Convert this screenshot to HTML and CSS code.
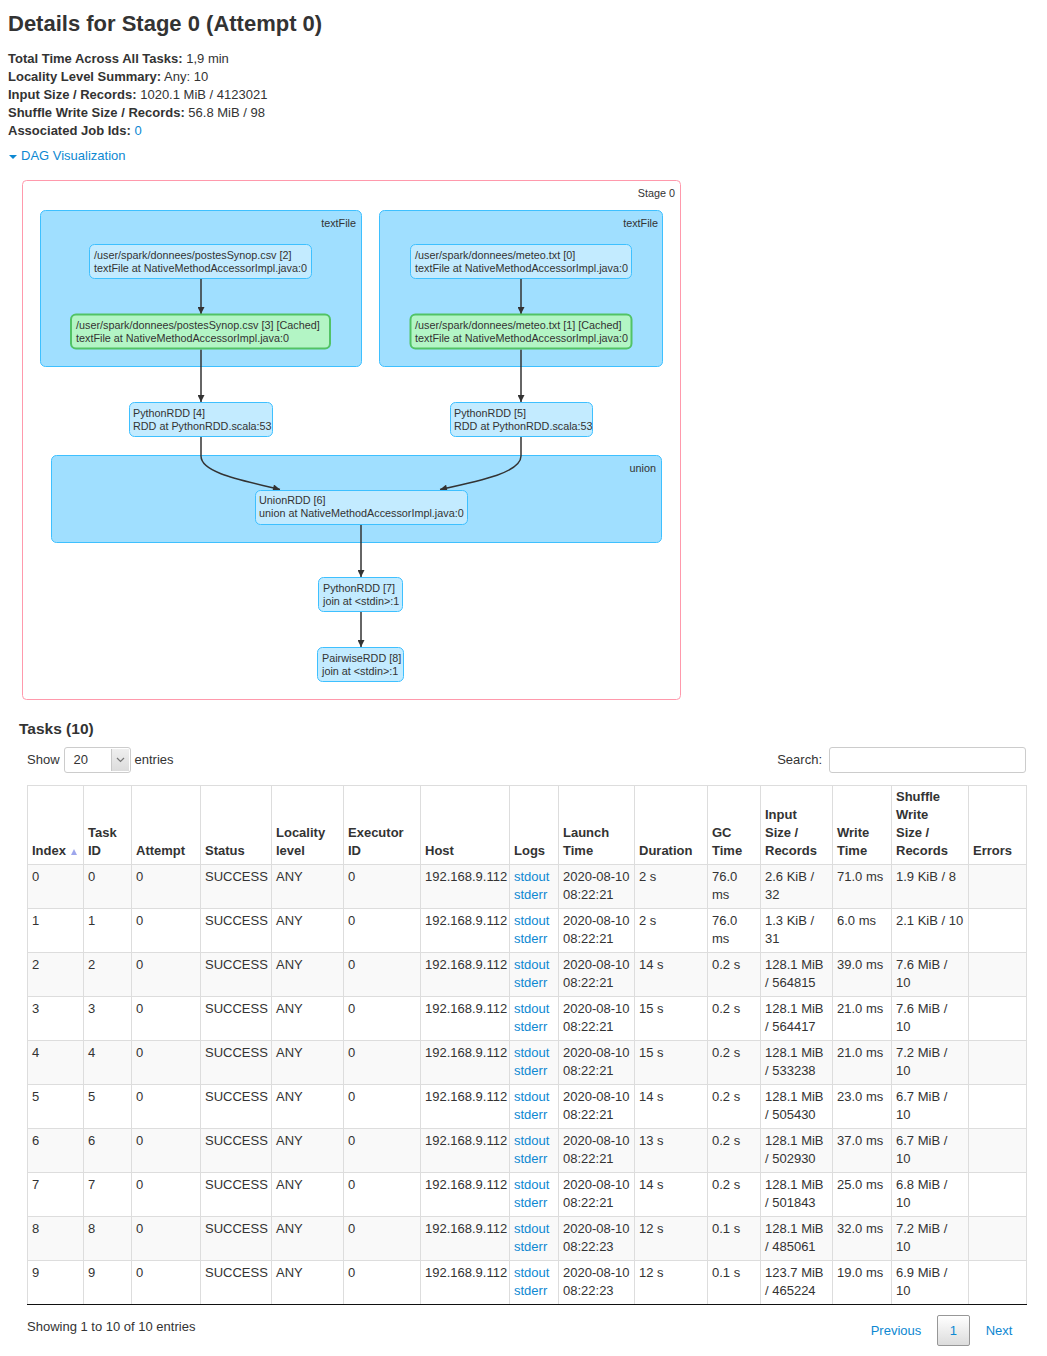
FILE: index.html
```html
<!DOCTYPE html>
<html lang="en">
<head>
<meta charset="utf-8">
<title>Details for Stage 0 (Attempt 0)</title>
<link rel="stylesheet" href="styles.css">
</head>
<body>
<div class="page">
  <h3 class="title">Details for Stage 0 (Attempt 0)</h3>
  <ul class="summary">
    <li><strong>Total Time Across All Tasks:</strong> 1,9 min</li>
    <li><strong>Locality Level Summary:</strong> Any: 10</li>
    <li><strong>Input Size / Records:</strong> 1020.1 MiB / 4123021</li>
    <li><strong>Shuffle Write Size / Records:</strong> 56.8 MiB / 98</li>
    <li><strong>Associated Job Ids:</strong> <a href="#">0</a></li>
  </ul>
  <a class="dag-toggle" href="#"><span class="caret"></span><span>DAG Visualization</span></a>

  <svg class="dag" width="660" height="521" viewBox="22 180 660 521" xmlns="http://www.w3.org/2000/svg">
    <defs>
      <marker id="arrow" viewBox="0 0 10 10" refX="10" refY="5" markerUnits="userSpaceOnUse" markerWidth="8" markerHeight="7" orient="auto">
        <path d="M0,0 L10,5 L0,10 z" fill="#333"/>
      </marker>
    </defs>
    <rect class="stage" x="22.5" y="180.5" width="658" height="519" rx="4"/>
    <text class="lbl" x="675" y="197" text-anchor="end">Stage 0</text>

    <rect class="cluster" x="40.5" y="210.5" width="321" height="156" rx="5"/>
    <text class="lbl" x="356" y="227" text-anchor="end">textFile</text>
    <rect class="cluster" x="379.5" y="210.5" width="283" height="156" rx="5"/>
    <text class="lbl" x="658" y="227" text-anchor="end">textFile</text>
    <rect class="cluster" x="51.5" y="455.5" width="610" height="87" rx="5"/>
    <text class="lbl" x="656" y="472" text-anchor="end">union</text>

    <path class="edge" d="M201,278.5 L201,314"/>
    <path class="edge" d="M521,278.5 L521,314"/>
    <path class="edge" d="M201,349.5 L201,402"/>
    <path class="edge" d="M521,349.5 L521,402"/>
    <path class="edge" d="M201,436.5 L201,456 C201,472 236,479 280,489.5"/>
    <path class="edge" d="M521,436.5 L521,456 C521,472 484,480 440,489.5"/>
    <path class="edge" d="M361,524.5 L361,577"/>
    <path class="edge" d="M361,611.5 L361,647"/>

    <rect class="node" x="89.5" y="244.5" width="222" height="34" rx="5"/>
    <text class="nt" x="94" y="259">/user/spark/donnees/postesSynop.csv [2]</text>
    <text class="nt" x="94" y="272">textFile at NativeMethodAccessorImpl.java:0</text>

    <rect class="node" x="410.5" y="244.5" width="221" height="34" rx="5"/>
    <text class="nt" x="415" y="259">/user/spark/donnees/meteo.txt [0]</text>
    <text class="nt" x="415" y="272">textFile at NativeMethodAccessorImpl.java:0</text>

    <rect class="node cached" x="71" y="314.5" width="259" height="34" rx="5"/>
    <text class="nt" x="76" y="329">/user/spark/donnees/postesSynop.csv [3] [Cached]</text>
    <text class="nt" x="76" y="342">textFile at NativeMethodAccessorImpl.java:0</text>

    <rect class="node cached" x="410.5" y="314.5" width="221" height="34" rx="5"/>
    <text class="nt" x="415" y="329">/user/spark/donnees/meteo.txt [1] [Cached]</text>
    <text class="nt" x="415" y="342">textFile at NativeMethodAccessorImpl.java:0</text>

    <rect class="node" x="129.5" y="402.5" width="143" height="34" rx="5"/>
    <text class="nt" x="133" y="417">PythonRDD [4]</text>
    <text class="nt" x="133" y="430">RDD at PythonRDD.scala:53</text>

    <rect class="node" x="450.5" y="402.5" width="142" height="34" rx="5"/>
    <text class="nt" x="454" y="417">PythonRDD [5]</text>
    <text class="nt" x="454" y="430">RDD at PythonRDD.scala:53</text>

    <rect class="node" x="255.5" y="490.5" width="212" height="34" rx="5"/>
    <text class="nt" x="259" y="504">UnionRDD [6]</text>
    <text class="nt" x="259" y="517">union at NativeMethodAccessorImpl.java:0</text>

    <rect class="node" x="318.5" y="577.5" width="84" height="34" rx="5"/>
    <text class="nt" x="323" y="592">PythonRDD [7]</text>
    <text class="nt" x="323" y="605">join at &lt;stdin&gt;:1</text>

    <rect class="node" x="317.5" y="647.5" width="86" height="34" rx="5"/>
    <text class="nt" x="322" y="662">PairwiseRDD [8]</text>
    <text class="nt" x="322" y="675">join at &lt;stdin&gt;:1</text>
  </svg>

  <section class="tasks">
    <h4 class="tasks-title">Tasks (10)</h4>
    <div class="tasks-body">
      <div class="controls">
        <div class="length">
          <span>Show</span>
          <span class="select"><span class="select-val">20</span><span class="select-btn"><svg width="9" height="6" viewBox="0 0 9 6"><path d="M1 1 L4.5 4.5 L8 1" fill="none" stroke="#777" stroke-width="1.2"/></svg></span></span>
          <span>entries</span>
        </div>
        <div class="search">
          <span>Search:</span>
          <span class="search-input"></span>
        </div>
      </div>

      <table class="task-table">
        <colgroup>
          <col style="width:56px"><col style="width:48px"><col style="width:69px"><col style="width:71px"><col style="width:72px"><col style="width:77px"><col style="width:89px"><col style="width:49px"><col style="width:76px"><col style="width:73px"><col style="width:53px"><col style="width:72px"><col style="width:59px"><col style="width:77px"><col style="width:58px">
        </colgroup>
        <thead>
          <tr>
            <th>Index<span class="sort-asc"></span></th>
            <th>Task<br>ID</th>
            <th>Attempt</th>
            <th>Status</th>
            <th>Locality<br>level</th>
            <th>Executor<br>ID</th>
            <th>Host</th>
            <th>Logs</th>
            <th>Launch<br>Time</th>
            <th>Duration</th>
            <th>GC<br>Time</th>
            <th>Input<br>Size /<br>Records</th>
            <th>Write<br>Time</th>
            <th>Shuffle<br>Write<br>Size /<br>Records</th>
            <th>Errors</th>
          </tr>
        </thead>
        <tbody>
          <tr><td>0</td><td>0</td><td>0</td><td>SUCCESS</td><td>ANY</td><td>0</td><td>192.168.9.112</td><td><a href="#">stdout</a><br><a href="#">stderr</a></td><td>2020-08-10<br>08:22:21</td><td>2 s</td><td>76.0<br>ms</td><td>2.6 KiB /<br>32</td><td>71.0 ms</td><td>1.9 KiB / 8</td><td></td></tr>
          <tr><td>1</td><td>1</td><td>0</td><td>SUCCESS</td><td>ANY</td><td>0</td><td>192.168.9.112</td><td><a href="#">stdout</a><br><a href="#">stderr</a></td><td>2020-08-10<br>08:22:21</td><td>2 s</td><td>76.0<br>ms</td><td>1.3 KiB /<br>31</td><td>6.0 ms</td><td>2.1 KiB / 10</td><td></td></tr>
          <tr><td>2</td><td>2</td><td>0</td><td>SUCCESS</td><td>ANY</td><td>0</td><td>192.168.9.112</td><td><a href="#">stdout</a><br><a href="#">stderr</a></td><td>2020-08-10<br>08:22:21</td><td>14 s</td><td>0.2 s</td><td>128.1 MiB<br>/ 564815</td><td>39.0 ms</td><td>7.6 MiB /<br>10</td><td></td></tr>
          <tr><td>3</td><td>3</td><td>0</td><td>SUCCESS</td><td>ANY</td><td>0</td><td>192.168.9.112</td><td><a href="#">stdout</a><br><a href="#">stderr</a></td><td>2020-08-10<br>08:22:21</td><td>15 s</td><td>0.2 s</td><td>128.1 MiB<br>/ 564417</td><td>21.0 ms</td><td>7.6 MiB /<br>10</td><td></td></tr>
          <tr><td>4</td><td>4</td><td>0</td><td>SUCCESS</td><td>ANY</td><td>0</td><td>192.168.9.112</td><td><a href="#">stdout</a><br><a href="#">stderr</a></td><td>2020-08-10<br>08:22:21</td><td>15 s</td><td>0.2 s</td><td>128.1 MiB<br>/ 533238</td><td>21.0 ms</td><td>7.2 MiB /<br>10</td><td></td></tr>
          <tr><td>5</td><td>5</td><td>0</td><td>SUCCESS</td><td>ANY</td><td>0</td><td>192.168.9.112</td><td><a href="#">stdout</a><br><a href="#">stderr</a></td><td>2020-08-10<br>08:22:21</td><td>14 s</td><td>0.2 s</td><td>128.1 MiB<br>/ 505430</td><td>23.0 ms</td><td>6.7 MiB /<br>10</td><td></td></tr>
          <tr><td>6</td><td>6</td><td>0</td><td>SUCCESS</td><td>ANY</td><td>0</td><td>192.168.9.112</td><td><a href="#">stdout</a><br><a href="#">stderr</a></td><td>2020-08-10<br>08:22:21</td><td>13 s</td><td>0.2 s</td><td>128.1 MiB<br>/ 502930</td><td>37.0 ms</td><td>6.7 MiB /<br>10</td><td></td></tr>
          <tr><td>7</td><td>7</td><td>0</td><td>SUCCESS</td><td>ANY</td><td>0</td><td>192.168.9.112</td><td><a href="#">stdout</a><br><a href="#">stderr</a></td><td>2020-08-10<br>08:22:21</td><td>14 s</td><td>0.2 s</td><td>128.1 MiB<br>/ 501843</td><td>25.0 ms</td><td>6.8 MiB /<br>10</td><td></td></tr>
          <tr><td>8</td><td>8</td><td>0</td><td>SUCCESS</td><td>ANY</td><td>0</td><td>192.168.9.112</td><td><a href="#">stdout</a><br><a href="#">stderr</a></td><td>2020-08-10<br>08:22:23</td><td>12 s</td><td>0.1 s</td><td>128.1 MiB<br>/ 485061</td><td>32.0 ms</td><td>7.2 MiB /<br>10</td><td></td></tr>
          <tr><td>9</td><td>9</td><td>0</td><td>SUCCESS</td><td>ANY</td><td>0</td><td>192.168.9.112</td><td><a href="#">stdout</a><br><a href="#">stderr</a></td><td>2020-08-10<br>08:22:23</td><td>12 s</td><td>0.1 s</td><td>123.7 MiB<br>/ 465224</td><td>19.0 ms</td><td>6.9 MiB /<br>10</td><td></td></tr>
        </tbody>
      </table>

      <div class="table-footer">
        <div class="info">Showing 1 to 10 of 10 entries</div>
        <div class="paginate">
          <a class="pbtn" href="#">Previous</a>
          <a class="pbtn current" href="#">1</a>
          <a class="pbtn" href="#">Next</a>
        </div>
      </div>
    </div>
  </section>
</div>
</body>
</html>
```

FILE: styles.css
```css
html, body {
  margin: 0;
  padding: 0;
}

body {
  font-family: "Liberation Sans", Arial, sans-serif;
  font-size: 13px;
  line-height: 18px;
  color: #333;
  background: #fff;
}

a {
  color: #0d88d2;
  text-decoration: none;
}

.page {
  padding: 0 21px 0 8px;
}

.title {
  font-size: 22px;
  line-height: 24px;
  font-weight: bold;
  margin: 12px 0 14px;
}

.summary {
  list-style: none;
  margin: 0;
  padding: 0;
}

.dag-toggle {
  display: flex;
  align-items: center;
  gap: 4px;
  margin-top: 7px;
  width: max-content;
}

.caret {
  width: 0;
  height: 0;
  margin-left: 1px;
  margin-top: 1px;
  border-left: 4px solid transparent;
  border-right: 4px solid transparent;
  border-top: 4px solid #0d88d2;
}

.dag {
  display: block;
  margin: 15px 0 0 14px;
}

.dag .stage {
  fill: #fff;
  stroke: #ff99ac;
  stroke-width: 1;
}

.dag .cluster {
  fill: #a0dfff;
  stroke: #3ec0ff;
  stroke-width: 1;
}

.dag .node {
  fill: #c3ebff;
  stroke: #3ec0ff;
  stroke-width: 1;
}

.dag .node.cached {
  fill: #b3f5c5;
  stroke: #52c366;
  stroke-width: 2;
}

.dag .edge {
  fill: none;
  stroke: #333;
  stroke-width: 1.5;
  marker-end: url(#arrow);
}

.dag text {
  font-family: "Liberation Sans", Arial, sans-serif;
  font-size: 10.8px;
  fill: #333;
}

.tasks {
  margin-top: 19px;
  padding-left: 11px;
}

.tasks-title {
  font-size: 15.5px;
  line-height: 18px;
  font-weight: bold;
  margin: 0;
}

.tasks-body {
  padding-left: 8px;
}

.controls {
  display: flex;
  justify-content: space-between;
  align-items: center;
  margin-top: 9px;
  height: 26px;
}

.length, .search {
  display: flex;
  align-items: center;
  gap: 4px;
}

.search {
  gap: 7px;
}

.select {
  display: flex;
  box-sizing: border-box;
  width: 67px;
  height: 26px;
  border: 1px solid #ccc;
  border-radius: 3px;
  background: #fff;
}

.select-val {
  flex: 1;
  padding-left: 9px;
  line-height: 24px;
}

.select-btn {
  display: flex;
  align-items: center;
  justify-content: center;
  width: 17px;
  margin: 1px 1px 1px 0;
  border-left: 1px solid #c8c8c8;
  background: linear-gradient(#efefef, #dcdcdc);
}

.search-input {
  box-sizing: border-box;
  width: 197px;
  height: 26px;
  border: 1px solid #ccc;
  border-radius: 3px;
  background: #fff;
}

.task-table {
  margin-top: 12px;
  width: 999px;
  table-layout: fixed;
  border-collapse: collapse;
}

.task-table th,
.task-table td {
  border: 1px solid #ddd;
  padding: 2px 3px 5px 4px;
  text-align: left;
  white-space: nowrap;
}

.task-table th {
  vertical-align: bottom;
  font-weight: bold;
  padding-bottom: 4px;
}

.task-table td {
  vertical-align: top;
  padding-top: 3px;
  padding-bottom: 4px;
}

.task-table tbody tr:nth-child(odd) td {
  background: #f9f9f9;
}

.task-table tbody tr:last-child td {
  border-bottom: 1px solid #111;
}

.sort-asc {
  display: inline-block;
  width: 0;
  height: 0;
  margin-left: 5px;
  border-left: 3.5px solid transparent;
  border-right: 3.5px solid transparent;
  border-bottom: 6px solid #9ea6ec;
}

.table-footer {
  display: flex;
  justify-content: space-between;
  align-items: flex-start;
  margin-top: 10px;
}

.info {
  padding-top: 3px;
}

.paginate {
  display: flex;
  align-items: center;
}

.pbtn {
  display: block;
  box-sizing: border-box;
  height: 31px;
  padding: 6px 12.6px;
  margin-left: 2px;
  border: 1px solid transparent;
  border-radius: 2px;
}

.pbtn.current {
  padding: 6px 12px;
  border-color: #979797;
  background: linear-gradient(#fff, #dcdcdc);
}
```
